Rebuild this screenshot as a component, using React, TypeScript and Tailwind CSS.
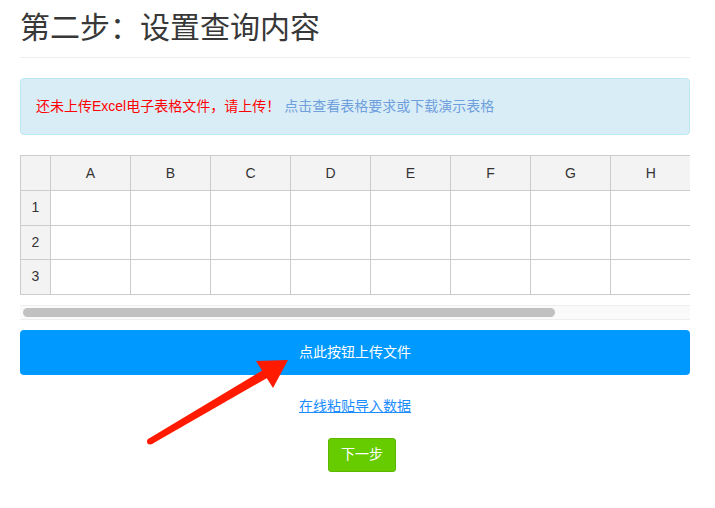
import React from "react";

const cols = ["A", "B", "C", "D", "E", "F", "G", "H"];
const rows = [1, 2, 3];

const font = { fontFamily: '"Liberation Sans", "Noto Sans CJK SC", sans-serif' };

const RedArrow = () => (
  <svg
    className="pointer-events-none absolute left-0 top-0"
    width="715"
    height="508"
    viewBox="0 0 715 508"
  >
    {/* shaft */}
    <polygon points="148.5,438.8 151.5,444.2 268,377.5 263,370" fill="#ff1a00" />
    <circle cx="150" cy="441.5" r="3" fill="#ff1a00" />
    {/* head */}
    <polygon points="256,361 288,360 273,388" fill="#ff1a00" />
  </svg>
);

const App = () => {
  return (
    <div className="relative h-[508px] w-[715px] overflow-hidden bg-white" style={font}>
      <div className="w-[670px] ml-5">
        {/* Title */}
        <h1 className="border-b border-[#eeeeee] pb-[9px] pt-[8px] text-[30px] leading-[40px] text-[#383838]">
          第二步：设置查询内容
        </h1>

        {/* Alert */}
        <div className="mt-5 flex h-[57px] items-center rounded border border-[#bce8f1] bg-[#d9edf7] px-[15px] text-[14px]">
          <span className="text-[#ff0000]">还未上传Excel电子表格文件，请上传！</span>
          <a className="ml-[4px] cursor-pointer text-[#6f9fdc]">点击查看表格要求或下载演示表格</a>
        </div>

        {/* Spreadsheet */}
        <div className="mt-5 w-[670px] overflow-hidden">
          <table className="border-collapse text-[14px] text-[#333333]">
            <thead>
              <tr className="h-[35px] bg-[#f3f3f3]">
                <th className="w-[30px] min-w-[30px] border border-[#cccccc] font-normal"></th>
                {cols.map((c, i) => (
                  <th
                    key={c}
                    className={
                      i === cols.length - 1
                        ? "w-[80px] min-w-[80px] border border-r-0 border-[#cccccc] font-normal"
                        : "w-[80px] min-w-[80px] border border-[#cccccc] font-normal"
                    }
                  >
                    {c}
                  </th>
                ))}
              </tr>
            </thead>
            <tbody>
              {rows.map((r) => (
                <tr key={r} className="h-[34.6px]">
                  <td className="border border-[#cccccc] bg-[#f3f3f3] text-center">{r}</td>
                  {cols.map((c, i) => (
                    <td
                      key={c}
                      className={
                        i === cols.length - 1
                          ? "border border-r-0 border-[#cccccc] bg-white"
                          : "border border-[#cccccc] bg-white"
                      }
                    ></td>
                  ))}
                </tr>
              ))}
            </tbody>
          </table>
        </div>

        {/* Scrollbar */}
        <div className="mt-[10px] flex h-[15px] items-center border-y border-[#eeeeee] bg-[#fafafa] px-[3px]">
          <div className="h-[9px] w-[532px] rounded-full bg-[#c1c1c1]"></div>
        </div>

        {/* Upload button */}
        <button className="mt-[10px] flex h-[45px] w-full items-center justify-center rounded-sm bg-[#0099ff] text-[14px] text-white">
          点此按钮上传文件
        </button>

        <div className="mt-[19px] text-center">
          <a className="cursor-pointer text-[14px] leading-[20px] text-[#1a8cff] underline">在线粘贴导入数据</a>
        </div>

        <div className="mt-[20px] flex justify-center pl-[14px]">
          <button className="flex h-[34px] w-[68px] items-center justify-center rounded-[3px] border border-[#5cb800] bg-[#66cc00] text-[14px] text-white">
            下一步
          </button>
        </div>
      </div>

      <RedArrow />
    </div>
  );
};

export default App;
